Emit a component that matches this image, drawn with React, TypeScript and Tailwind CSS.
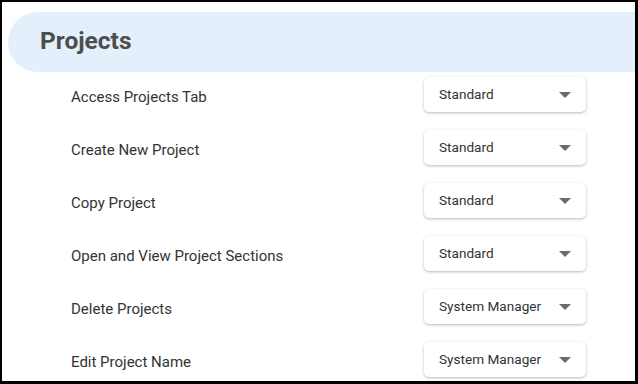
const rows = [
  { label: "Access Projects Tab", value: "Standard" },
  { label: "Create New Project", value: "Standard" },
  { label: "Copy Project", value: "Standard" },
  { label: "Open and View Project Sections", value: "Standard" },
  { label: "Delete Projects", value: "System Manager" },
  { label: "Edit Project Name", value: "System Manager" },
];

function Select({ value }: { value: string }) {
  return (
    <div className="flex h-[35px] w-[162px] items-center justify-between rounded-[5px] bg-white pl-[15px] pr-[15px] shadow-[0_1px_3px_rgba(0,0,0,0.28)]">
      <span className="text-[13.6px] text-[#333]">{value}</span>
      <span className="h-0 w-0 border-x-[6px] border-t-[6px] border-x-transparent border-t-[#6b6b6b]" />
    </div>
  );
}

export default function App() {
  return (
    <div
      className="box-border h-[384px] w-[638px] overflow-hidden border-b-[3px] border-l-2 border-r-[3px] border-t-2 border-black bg-white"
      style={{ fontFamily: "Roboto, 'Liberation Sans', sans-serif" }}
    >
      <div className="ml-[6px] mt-[10px] flex h-[60px] items-center rounded-l-[30px] bg-[#e3f0fb] pl-[32px]">
        <h1 className="pb-[1px] text-[24.5px] font-bold text-[#4d4d4d]">Projects</h1>
      </div>
      <div className="flex flex-col gap-[18px] pl-[69px] pt-[5px]">
        {rows.map((r) => (
          <div key={r.label} className="grid grid-cols-[353px_162px] items-center">
            <span className="pt-[5px] text-[15px] text-[#333]">{r.label}</span>
            <Select value={r.value} />
          </div>
        ))}
      </div>
    </div>
  );
}
